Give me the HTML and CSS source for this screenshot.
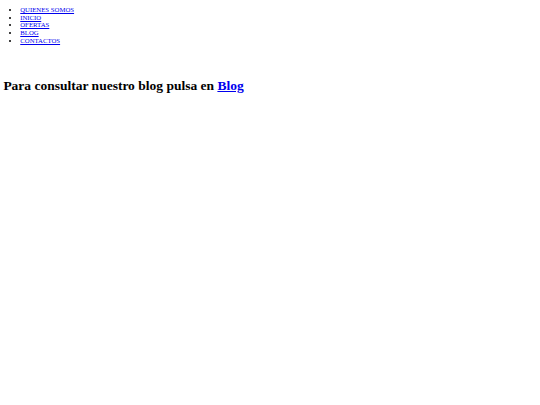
FILE: index.html
```html
<!DOCTYPE html>
<html lang="es">
<head>
<meta charset="utf-8">
<title>Blog</title>
<link rel="stylesheet" href="styles.css">
</head>
<body class="page">
<ul class="menu">
<li><a href="#">QUIENES SOMOS</a></li>
<li><a href="#">INICIO</a></li>
<li><a href="#">OFERTAS</a></li>
<li><a href="#">BLOG</a></li>
<li><a href="#">CONTACTOS</a></li>
</ul>
<h1 class="title">Para consultar nuestro blog pulsa en <a href="#">Blog</a></h1>
</body>
</html>
```
FILE: styles.css
```css
html { background: #fff; }
.page {
  margin: 3.375px;
  font-family: "Liberation Serif", "Times New Roman", serif;
  font-size: 6.75px;
  color: #000;
}
.page a { color: #0000ee; }
.menu {
  margin: 2.75px 0 6.75px;
  padding-left: 16.875px;
  line-height: 7.6px;
}
.title {
  font-size: 13.5px;
  margin: 9px 0;
  padding-top: 25px;
}
```
